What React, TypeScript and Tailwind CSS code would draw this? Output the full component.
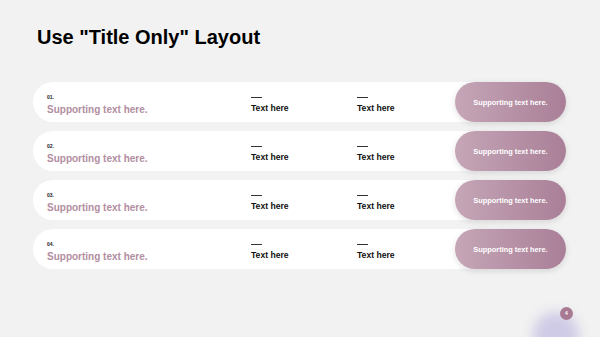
import type { FC } from "react";

interface RowData {
  index: string;
}

const rows: RowData[] = [
  { index: "01." },
  { index: "02." },
  { index: "03." },
  { index: "04." },
];

const TextColumn: FC<{ width: string }> = ({ width }) => (
  <div className={`flex flex-col justify-center pt-[6px] ${width}`}>
    <span className="mb-[6px] block h-px w-[11px] bg-[#333]" />
    <span className="text-[8.6px] font-bold leading-none text-[#111]">
      Text here
    </span>
  </div>
);

const Row: FC<RowData> = ({ index }) => (
  <div className="flex h-[40px] items-center rounded-full bg-white">
    {/* Left label */}
    <div className="flex w-[218px] flex-col justify-center pl-[14px] pt-[6px]">
      <span className="text-[5px] font-bold leading-none text-[#222]">
        {index}
      </span>
      <span className="mt-[5px] text-[10px] font-bold leading-none text-[#b28ea1]">
        Supporting text here.
      </span>
    </div>

    <TextColumn width="w-[106px]" />
    <TextColumn width="w-[98px]" />

    {/* Accent pill */}
    <div className="ml-auto flex h-[40px] w-[111px] items-center justify-center rounded-full bg-linear-to-r from-[#c5a6b7] to-[#a97f97] shadow-[0_2px_6px_rgba(0,0,0,0.12)]">
      <span className="pt-[2px] text-[7.4px] font-bold leading-none text-white">
        Supporting text here.
      </span>
    </div>
  </div>
);

const App: FC = () => {
  return (
    <div
      className="relative h-[337px] w-[600px] overflow-hidden bg-[#f2f2f2]"
      style={{ fontFamily: '"Liberation Sans", Arial, sans-serif' }}
    >
      <h1 className="pl-[37px] pt-[27px] text-[20px] font-bold leading-none text-black">
        Use "Title Only" Layout
      </h1>

      <div className="ml-[33px] mt-[35px] flex w-[533px] flex-col gap-[9px]">
        {rows.map((r) => (
          <Row key={r.index} {...r} />
        ))}
      </div>

      {/* decorative blur + page number */}
      <div className="absolute left-[533px] top-[312px] h-[46px] w-[46px] rounded-full bg-[#cfcbe6] blur-[6px]" />
      <div className="absolute left-[560px] top-[307px] flex h-[13px] w-[13px] items-center justify-center rounded-full bg-[#a87a92]">
        <span className="text-[5px] font-bold leading-none text-white">4</span>
      </div>
    </div>
  );
};

export default App;
